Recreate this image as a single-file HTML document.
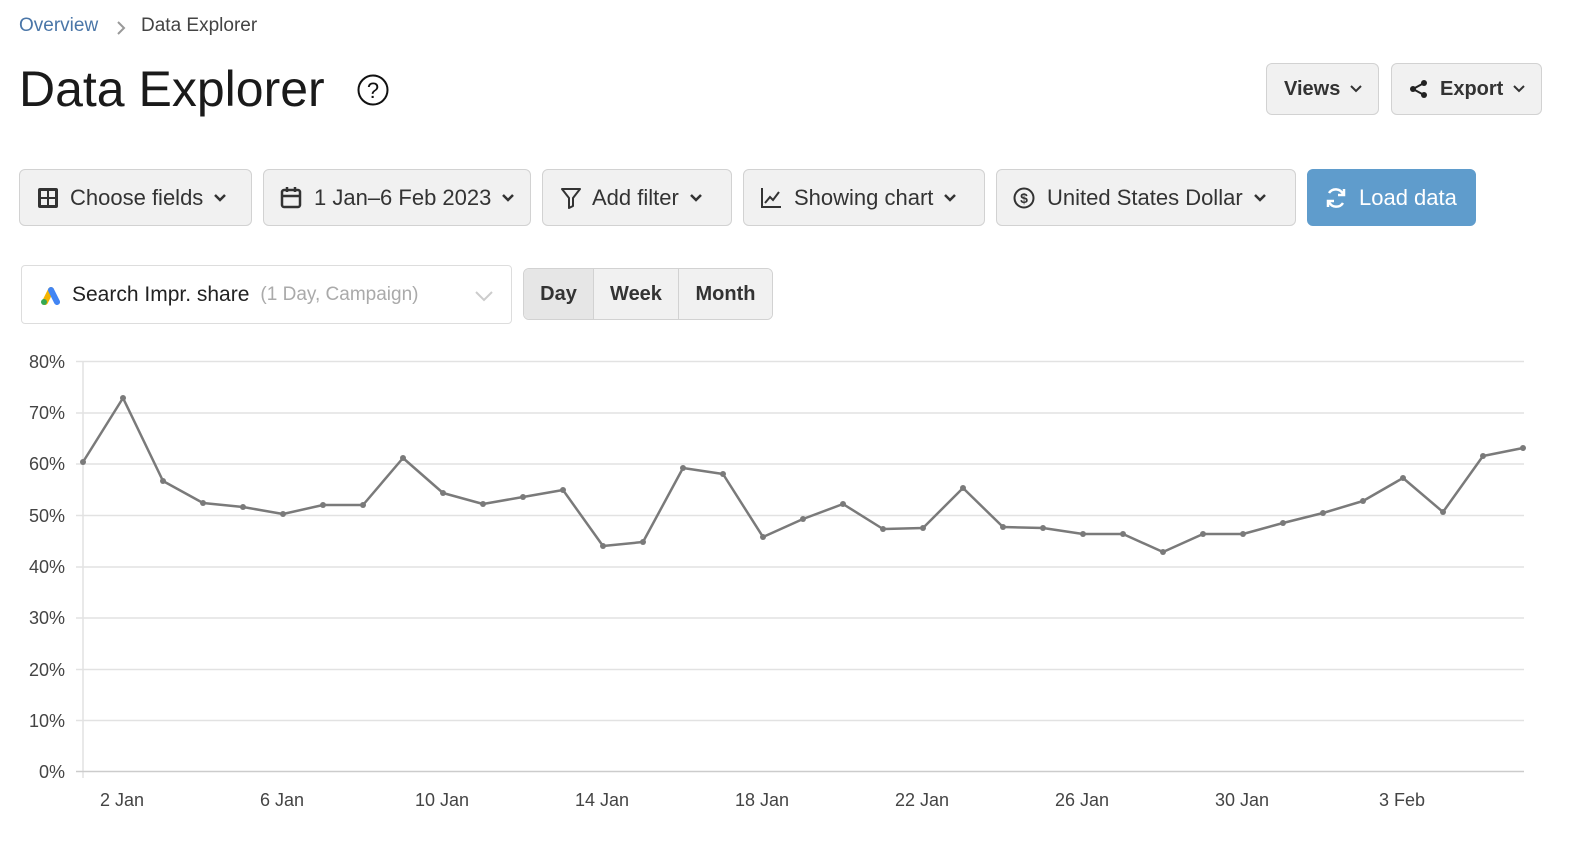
<!DOCTYPE html>
<html><head><meta charset="utf-8"><style>
*{box-sizing:border-box;margin:0;padding:0}
body{width:1594px;height:844px;background:#fff;font-family:"Liberation Sans",sans-serif;color:#222;position:relative;overflow:hidden}
.abs{position:absolute}
.btn{position:absolute;background:#f1f1f1;border:1px solid #d2d2d2;border-radius:6px;display:flex;align-items:center;font-size:22px;color:#333}
.btn svg{flex:none}
.chev{margin-left:10px}
</style></head><body>
<div class="abs" style="left:19px;top:15px;font-size:19px;color:#4a76a8">Overview</div>
<svg class="abs" style="left:115px;top:20px" width="12" height="16"><path d="M3 2l6 6-6 6" stroke="#999" stroke-width="2" fill="none"/></svg>
<div class="abs" style="left:141px;top:15px;font-size:19px;color:#444">Data Explorer</div>
<div class="abs" style="left:19px;top:60px;font-size:50px;color:#1a1a1a">Data Explorer</div>
<svg class="abs" style="left:356px;top:73px" width="34" height="34"><circle cx="17" cy="17" r="14.5" stroke="#111" stroke-width="2" fill="none"/><text x="17" y="25" text-anchor="middle" font-size="22" font-family="Liberation Sans" fill="#111">?</text></svg>

<div class="btn" style="left:1266px;top:63px;width:113px;height:52px;padding-left:17px;font-size:20px;font-weight:bold">Views<svg class="chev" width="12" height="8"><path d="M1 1l5 5 5-5" stroke="#333" stroke-width="2" fill="none"/></svg></div>
<div class="btn" style="left:1391px;top:63px;width:151px;height:52px;padding-left:16px;font-size:20px;font-weight:bold"><svg width="22" height="20" style="margin-right:10px"><circle cx="16" cy="4" r="3" fill="#222"/><circle cx="16" cy="16" r="3" fill="#222"/><circle cx="5" cy="10" r="3" fill="#222"/><path d="M16 4L5 10l11 6" stroke="#222" stroke-width="2" fill="none"/></svg>Export<svg class="chev" width="12" height="8"><path d="M1 1l5 5 5-5" stroke="#333" stroke-width="2" fill="none"/></svg></div>

<div class="btn" style="left:19px;top:169px;width:233px;height:57px;padding-left:17px"><svg width="22" height="22" style="margin-right:11px"><rect x="1" y="1" width="20" height="20" rx="2" fill="#333"/><rect x="4" y="4" width="6" height="6" fill="#f1f1f1"/><rect x="12" y="4" width="6" height="6" fill="#f1f1f1"/><rect x="4" y="12" width="6" height="6" fill="#f1f1f1"/><rect x="12" y="12" width="6" height="6" fill="#f1f1f1"/></svg>Choose fields<svg class="chev" width="14" height="9"><path d="M2 2l5 5 5-5" stroke="#333" stroke-width="2.5" fill="none"/></svg></div>
<div class="btn" style="left:263px;top:169px;width:268px;height:57px;padding-left:16px"><svg width="22" height="24" style="margin-right:12px"><rect x="2" y="4" width="18" height="17" rx="2" stroke="#333" stroke-width="2.5" fill="none"/><path d="M2 10h18M7 1v5M15 1v5" stroke="#333" stroke-width="2.5"/></svg>1 Jan–6 Feb 2023<svg class="chev" width="14" height="9"><path d="M2 2l5 5 5-5" stroke="#333" stroke-width="2.5" fill="none"/></svg></div>
<div class="btn" style="left:542px;top:169px;width:190px;height:57px;padding-left:17px"><svg width="22" height="22" style="margin-right:10px"><path d="M2 2h18l-7 9v8l-4 2V11z" stroke="#333" stroke-width="2" fill="none" stroke-linejoin="round"/></svg>Add filter<svg class="chev" width="14" height="9"><path d="M2 2l5 5 5-5" stroke="#333" stroke-width="2.5" fill="none"/></svg></div>
<div class="btn" style="left:743px;top:169px;width:242px;height:57px;padding-left:16px"><svg width="22" height="22" style="margin-right:12px"><path d="M2 1v19h19" stroke="#333" stroke-width="2" fill="none"/><path d="M5 16l5-6 3 3 6-8" stroke="#333" stroke-width="2" fill="none"/></svg>Showing chart<svg class="chev" width="14" height="9"><path d="M2 2l5 5 5-5" stroke="#333" stroke-width="2.5" fill="none"/></svg></div>
<div class="btn" style="left:996px;top:169px;width:300px;height:57px;padding-left:16px"><svg width="22" height="22" style="margin-right:12px"><circle cx="11" cy="11" r="9.5" stroke="#333" stroke-width="2" fill="none"/><text x="11" y="16" text-anchor="middle" font-size="14" font-weight="bold" font-family="Liberation Sans" fill="#333">$</text></svg>United States Dollar<svg class="chev" width="14" height="9"><path d="M2 2l5 5 5-5" stroke="#333" stroke-width="2.5" fill="none"/></svg></div>
<div class="btn" style="left:1307px;top:169px;width:169px;height:57px;padding-left:16px;background:#5f9ccc;border-color:#5f9ccc;color:#fff"><svg width="24" height="24" style="margin-right:11px"><path d="M19 8A8 8 0 0 0 5 7M5 16a8 8 0 0 0 14 1" stroke="#fff" stroke-width="2.5" fill="none"/><path d="M20 3v6h-6M4 21v-6h6" stroke="#fff" stroke-width="2.5" fill="none"/></svg>Load data</div>

<div class="abs" style="left:21px;top:265px;width:491px;height:59px;border:1px solid #ddd;border-radius:4px;display:flex;align-items:center;padding-left:17px;font-size:21px;color:#222">
<svg width="22" height="20" style="margin-right:11px"><path d="M6 17L12 5" stroke="#f4b400" stroke-width="6" stroke-linecap="round"/><path d="M12 5l6 12" stroke="#4285f4" stroke-width="6" stroke-linecap="round"/><circle cx="5" cy="17" r="3" fill="#34a853"/></svg>Search Impr. share<span style="color:#aaa;font-size:19px;margin-left:11px">(1 Day, Campaign)</span>
<svg class="abs" style="left:452px;top:24px" width="20" height="12"><path d="M2 2l8 8 8-8" stroke="#ccc" stroke-width="2" fill="none"/></svg></div>

<div class="abs" style="left:523px;top:268px;width:250px;height:52px;border:1px solid #d2d2d2;border-radius:6px;display:flex;overflow:hidden;font-size:20px;font-weight:bold;color:#333">
<div style="width:70px;background:#e6e6e6;border-right:1px solid #d2d2d2;display:flex;align-items:center;justify-content:center">Day</div>
<div style="width:85px;background:#f1f1f1;border-right:1px solid #d2d2d2;display:flex;align-items:center;justify-content:center">Week</div>
<div style="flex:1;background:#f1f1f1;display:flex;align-items:center;justify-content:center">Month</div></div>

<svg class="abs" style="left:0;top:340px" width="1594" height="504">
<g transform="translate(0,-340)" font-family="Liberation Sans" font-size="18" fill="#444">
<g stroke="#e2e2e2" stroke-width="1.5">
<line x1="76" x2="1524" y1="361.5" y2="361.5"/><line x1="76" x2="1524" y1="413" y2="413"/><line x1="76" x2="1524" y1="464" y2="464"/><line x1="76" x2="1524" y1="515.5" y2="515.5"/><line x1="76" x2="1524" y1="567" y2="567"/><line x1="76" x2="1524" y1="618" y2="618"/><line x1="76" x2="1524" y1="669.5" y2="669.5"/><line x1="76" x2="1524" y1="720.5" y2="720.5"/>
<line x1="83" x2="83" y1="361" y2="778"/>
</g>
<line x1="76" x2="1524" y1="771.5" y2="771.5" stroke="#ccc" stroke-width="1.5"/>
<g text-anchor="end"><text x="65" y="368">80%</text><text x="65" y="419">70%</text><text x="65" y="470">60%</text><text x="65" y="522">50%</text><text x="65" y="573">40%</text><text x="65" y="624">30%</text><text x="65" y="676">20%</text><text x="65" y="727">10%</text><text x="65" y="778">0%</text></g>
<g text-anchor="middle"><text x="122" y="806">2 Jan</text><text x="282" y="806">6 Jan</text><text x="442" y="806">10 Jan</text><text x="602" y="806">14 Jan</text><text x="762" y="806">18 Jan</text><text x="922" y="806">22 Jan</text><text x="1082" y="806">26 Jan</text><text x="1242" y="806">30 Jan</text><text x="1402" y="806">3 Feb</text></g>
<polyline fill="none" stroke="#7a7a7a" stroke-width="2.5" stroke-linejoin="round" points="83,462 123,398 163,481 203,503 243,507 283,514 323,505 363,505 403,458 443,493 483,504 523,497 563,490 603,546 643,542 683,468 723,474 763,537 803,519 843,504 883,529 923,528 963,488 1003,527 1043,528 1083,534 1123,534 1163,552 1203,534 1243,534 1283,523 1323,513 1363,501 1403,478 1443,512 1483,456 1523,448"/>
<g fill="#7a7a7a"><circle cx="83" cy="462" r="3"/><circle cx="123" cy="398" r="3"/><circle cx="163" cy="481" r="3"/><circle cx="203" cy="503" r="3"/><circle cx="243" cy="507" r="3"/><circle cx="283" cy="514" r="3"/><circle cx="323" cy="505" r="3"/><circle cx="363" cy="505" r="3"/><circle cx="403" cy="458" r="3"/><circle cx="443" cy="493" r="3"/><circle cx="483" cy="504" r="3"/><circle cx="523" cy="497" r="3"/><circle cx="563" cy="490" r="3"/><circle cx="603" cy="546" r="3"/><circle cx="643" cy="542" r="3"/><circle cx="683" cy="468" r="3"/><circle cx="723" cy="474" r="3"/><circle cx="763" cy="537" r="3"/><circle cx="803" cy="519" r="3"/><circle cx="843" cy="504" r="3"/><circle cx="883" cy="529" r="3"/><circle cx="923" cy="528" r="3"/><circle cx="963" cy="488" r="3"/><circle cx="1003" cy="527" r="3"/><circle cx="1043" cy="528" r="3"/><circle cx="1083" cy="534" r="3"/><circle cx="1123" cy="534" r="3"/><circle cx="1163" cy="552" r="3"/><circle cx="1203" cy="534" r="3"/><circle cx="1243" cy="534" r="3"/><circle cx="1283" cy="523" r="3"/><circle cx="1323" cy="513" r="3"/><circle cx="1363" cy="501" r="3"/><circle cx="1403" cy="478" r="3"/><circle cx="1443" cy="512" r="3"/><circle cx="1483" cy="456" r="3"/><circle cx="1523" cy="448" r="3"/></g>
</g></svg>
</body></html>
